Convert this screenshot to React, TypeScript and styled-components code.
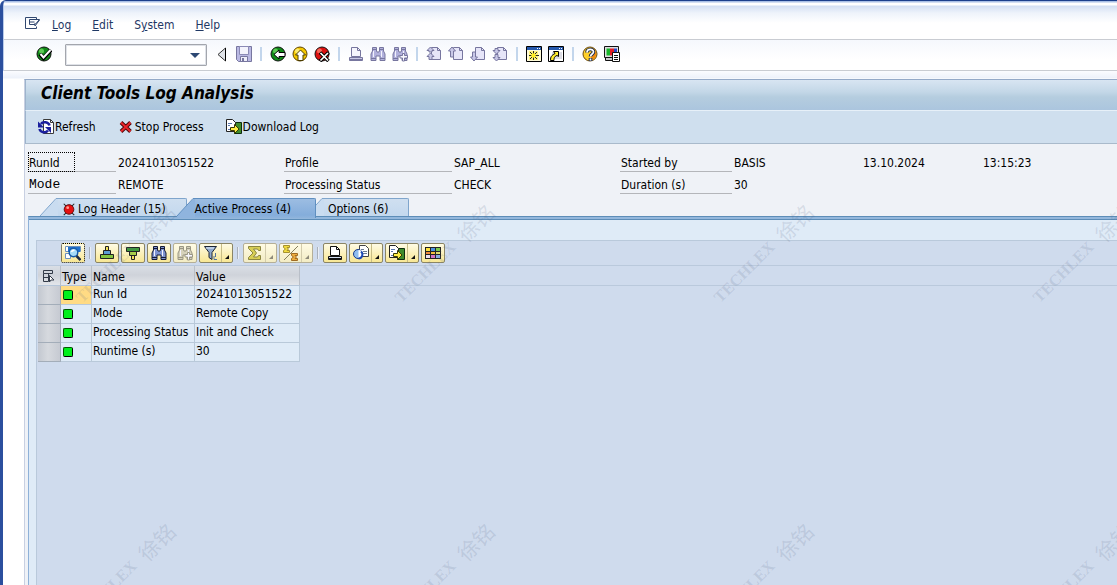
import React from "react";
import styled, { createGlobalStyle, css } from "styled-components";

const GlobalStyle = createGlobalStyle`
  *, *::before, *::after { box-sizing: border-box; }
  body {
    margin: 0;
    background: #ffffff;
    color: #000000;
    font-family: "DejaVu Sans Condensed", "DejaVu Sans", "Noto Sans CJK SC", sans-serif;
    font-size: 12px;
    line-height: 16px;
  }
  button, input, select { font: inherit; color: inherit; }
  svg { display: block; flex: none; }
`;

/* ---------- window frame ---------- */

const Window = styled.div`
  position: relative;
  display: flex;
  flex-direction: column;
  min-height: 100vh;
  overflow: hidden;
  border-top: 1px solid #1c3f8c;
  border-left: 3px solid #2b4f9e;
  border-top-left-radius: 6px;
  box-shadow: inset 1px 1px 0 #b9cbea;
  background: #ffffff;
`;

const MenuBar = styled.nav`
  display: flex;
  align-items: center;
  gap: 21px;
  height: 39px;
  margin: 0 0 0 1px;
  padding: 10px 0 0 21px;
  border-bottom: 1px solid #c9ccd2;
  background: linear-gradient(#a9bfe6 0, #a9bfe6 1px, #ffffff 2px, #ffffff 4px, #d3dff3 5px, #eef3fb 12px, #ffffff 22px);
`;

const MenuIcon = styled.button`
  display: flex;
  margin: 0 -10px 3px 0;
  padding: 0;
  border: 0;
  background: none;
`;

const MenuItem = styled.button`
  padding: 0;
  border: 0;
  background: none;
  color: #1f3864;
`;

const SystemBar = styled.div`
  display: flex;
  align-items: center;
  gap: 6px;
  height: 31px;
  margin-left: 1px;
  padding: 0 0 2px 32px;
  border-bottom: 1px solid #c9ccd2;
  background: linear-gradient(#f5f8fd, #ffffff 20px);
`;

const IconButton = styled.button`
  display: flex;
  flex: none;
  padding: 0;
  border: 0;
  background: none;
`;

const CommandBox = styled.div`
  display: flex;
  align-items: center;
  width: 142px;
  height: 22px;
  margin: 2px 1px 0 7px;
  padding-right: 6px;
  border: 1px solid #a3a6ad;
  border-radius: 1px;
  box-shadow: inset 0 0 0 1px #dfe2e8;
  background: #ffffff;
`;

const CommandInput = styled.input`
  flex: 1;
  min-width: 0;
  height: 16px;
  padding: 0 4px;
  border: 0;
  outline: 0;
  background: none;
`;

const BarDivider = styled.span`
  flex: none;
  width: 2px;
  height: 14px;
  margin: 0 2px;
  background: #c3d6ec;
`;

/* ---------- screen area ---------- */

const Screen = styled.main`
  display: flex;
  flex: 1;
  flex-direction: column;
  padding: 8px 0 0 20px;
  background: linear-gradient(#fbfcff, #edf1fa 7px, #ffffff 8px);
`;

const Work = styled.div`
  display: flex;
  flex: 1;
  flex-direction: column;
  margin-left: 1px;
  border-top: 1px solid #94a9c8;
  border-left: 1px solid #c8d0e2;
  background: #eff2f7;
`;

const Title = styled.h1`
  height: 31px;
  margin: 0;
  padding: 0 0 0 15px;
  border-left: 1px solid #9db4cc;
  border-bottom: 1px solid #e7f0f8;
  background: linear-gradient(#d8e5f2, #c3d7e7 12px, #b5cddf 17px, #abc5de);
  font-size: 17px;
  font-weight: bold;
  font-style: italic;
  line-height: 27px;
`;

const AppBar = styled.div`
  display: flex;
  align-items: center;
  gap: 22px;
  height: 33px;
  padding: 0 0 0 12px;
  border-left: 1px solid #9db4cc;
  border-bottom: 1px solid #a9bacb;
  background: #cfdfee;
`;

const AppButton = styled.button`
  display: flex;
  align-items: center;
  gap: 1px;
  padding: 0;
  border: 0;
  background: none;
`;

const Facts = styled.dl`
  display: grid;
  grid-template-columns: 90px 166px 170px 166px 114px 129px 120px auto;
  row-gap: 2px;
  margin: 0;
  padding: 8px 0 4px 3px;
`;

const Term = styled.dt<{ $column: number; $mono?: boolean }>`
  grid-column: ${(p) => p.$column};
  height: 20px;
  margin-right: 2px;
  padding: 3px 0 0 1px;
  border-bottom: 1px solid #b4b6ba;
  ${(p) =>
    p.$mono &&
    css`
      font-family: "Liberation Mono", monospace;
      font-size: 13px;
    `}
`;

const FocusMark = styled.span`
  display: block;
  width: 47px;
  height: 20px;
  margin: -3px 0 0 -1px;
  padding: 2px 0 0;
  border: 1px dotted #000000;
`;

const Detail = styled.dd`
  height: 20px;
  margin: 0;
  padding-top: 3px;
`;

/* ---------- tabs ---------- */

const TabList = styled.div`
  display: flex;
  height: 18px;
  padding-left: 15px;
`;

const Tab = styled.button<{ $active?: boolean }>`
  position: relative;
  z-index: ${(p) => (p.$active ? 2 : 1)};
  display: flex;
  height: ${(p) => (p.$active ? 20 : 18)}px;
  margin-right: -10px;
  padding: 0;
  border: 0;
  background: none;
  white-space: nowrap;
`;

const TabBody = styled.span<{ $active?: boolean }>`
  display: flex;
  align-items: center;
  gap: 2px;
  height: 100%;
  padding: ${(p) => (p.$active ? "0 24px 0 0" : "2px 20px 0 4px")};
  border-top: 1px solid ${(p) => (p.$active ? "#5f8fc0" : "#7fa5cc")};
  border-right: 1px solid ${(p) => (p.$active ? "#5f8fc0" : "#7fa5cc")};
  border-top-right-radius: 2px;
  background: ${(p) =>
    p.$active ? "linear-gradient(#9cbde2, #84addb 16px, #8fb4dc)" : "linear-gradient(#cfdff0, #c3d8ee)"};
`;

const TabPanel = styled.section`
  position: relative;
  display: flex;
  flex: 1;
  flex-direction: column;
  margin-left: 3px;
  padding: 20px 0 0 7px;
  border-left: 1px solid #8fb1d8;
  border-top: 1px solid #5d8db8;
  box-shadow: inset 0 2px 0 #93b7dc, inset 0 3px 0 #5d8db8;
  background: #dfebf7;
`;

/* ---------- list ---------- */

const Grid = styled.div`
  flex: 1;
  margin-top: 3px;
  border-left: 1px solid #b9c9db;
  border-top: 1px solid #b9c9db;
  background: #cfdbed;
`;

const GridBar = styled.div`
  display: flex;
  align-items: center;
  gap: 2px;
  height: 25px;
  padding-left: 24px;
  border-bottom: 1px solid #bac9dc;
`;

const GridButton = styled.button<{ $split?: boolean; $off?: boolean; $focus?: boolean }>`
  display: flex;
  flex: none;
  align-items: center;
  width: ${(p) => (p.$split ? 34 : 24)}px;
  height: 20px;
  padding: 0 0 0 3px;
  border: 1px ${(p) => (p.$focus ? "dotted #000000" : p.$off ? "solid #b5af97" : "solid #8b8565")};
  border-radius: 2px;
  background: linear-gradient(#fffbe4, ${(p) => (p.$off ? "#f3ecc4" : "#f8e794")});
`;

const SplitMark = styled.span<{ $off?: boolean }>`
  align-self: stretch;
  flex: 1;
  margin-left: 2px;
  border-left: 1px solid ${(p) => (p.$off ? "#d3ccac" : "#c8bd86")};
  display: flex;
  align-items: flex-end;
  justify-content: flex-end;
  padding: 0 3px 3px 0;
`;

const GridDivider = styled.span`
  flex: none;
  width: 2px;
  height: 12px;
  margin: 0 2px;
  border-left: 1px solid #a9b0ba;
  border-right: 1px solid #e9eef6;
`;

const Table = styled.table`
  width: 100%;
  margin-left: 1px;
  border-collapse: separate;
  border-spacing: 0;
  table-layout: fixed;
`;

const Head = styled.th`
  height: 20px;
  padding: 2px 0 0 1px;
  border-right: 1px solid #b9bfc8;
  border-bottom: 1px solid #b5c6d9;
  background: linear-gradient(#d9dee5, #cfd3da 9px, #e3e6ea);
  font-weight: normal;
  text-align: left;
  white-space: nowrap;
`;

const HeadFill = styled.th`
  border-bottom: 1px solid #bac9dc;
`;

const Cell = styled.td<{ $marked?: boolean }>`
  height: 19px;
  padding: 0 0 2px 1px;
  border-right: 1px solid #b9c9d9;
  border-bottom: 1px solid #b9c9d9;
  background: ${(p) => (p.$marked ? "#ffdb84" : "#dfebf7")};
  white-space: nowrap;
`;

const Picker = styled.td`
  height: 19px;
  padding: 0;
  border-right: 1px solid #a3adb9;
  border-bottom: 1px solid #a3adb9;
`;

const PickerButton = styled.button`
  display: block;
  width: 100%;
  height: 18px;
  padding: 0;
  border: 0;
  background: linear-gradient(90deg, #c3c8d0, #d6d9de 10px, #c6cad2);
`;

const Lamp = styled.span`
  display: block;
  width: 10px;
  height: 10px;
  margin: 2px 0 0 1px;
  border: 1px solid #005a00;
  border-right-color: #000000;
  border-bottom-color: #000000;
  border-radius: 2px;
  background: #00f01c;
`;

/* ---------- watermark ---------- */

const Watermarks = styled.div`
  position: absolute;
  inset: 93px 0 0 -38px;
  z-index: 5;
  display: grid;
  grid-template-columns: repeat(auto-fill, 319px);
  grid-auto-rows: 319px;
  width: 200vw;
  overflow: hidden;
  pointer-events: none;
`;

const Mark = styled.span`
  display: flex;
  align-items: center;
  justify-content: center;
  gap: 10px;
  transform: rotate(-45deg);
  color: rgba(90, 105, 135, 0.17);
  font-family: "Liberation Serif", serif;
  font-size: 16px;
  font-weight: bold;
`;

const MarkName = styled.span`
  font-family: "Noto Sans CJK SC", sans-serif;
  font-size: 21px;
  font-weight: normal;
`;

/* ---------- drawings ---------- */

const Pic = ({ children, size = 16 }: { children: React.ReactNode; size?: number }) => (
  <svg width={size} height={size} viewBox="0 0 16 16" fill="none" aria-hidden="true">
    {children}
  </svg>
);

const MenuGlyph = () => (
  <Pic>
    <path d="M11.500 3.500v-2H.500v11h11v-2M4.500 5V3.500h10L10.500 8H9M4.500 5v3.500H10V10l4.500-6M4.500 6h5" stroke="#30476f" />
  </Pic>
);

const Ball = ({ fill, shine, edge = "#111" }: { fill: string; shine: string; edge?: string }) => (
  <>
    <circle cx="8" cy="8" r="7" fill={fill} stroke={edge} />
    <circle cx="5.500" cy="5" r="2.500" fill={shine} opacity="0.8" />
  </>
);

const CheckIcon = () => (
  <Pic>
    <Ball fill="#118a18" shine="#6fdb62" />
    <path d="M4 8l3.500 4L15 4" stroke="#000" strokeWidth="4" />
    <path d="M4.500 8l3 3.500L14.500 4" stroke="#fff" strokeWidth="2" />
  </Pic>
);
const BackIcon = () => (
  <Pic>
    <Ball fill="#118a18" shine="#6fdb62" />
    <path d="M4 8.500l5-4.500v2.500h6v4H9V13z" fill="#fff" stroke="#000" />
  </Pic>
);
const ExitIcon = () => (
  <Pic>
    <Ball fill="#f4c800" shine="#fff48a" edge="#5e4300" />
    <path d="M8.500 4l5 5h-2.500v5.500H6V9H3.500z" fill="#fff" stroke="#4b3c00" />
  </Pic>
);
const CancelIcon = () => (
  <Pic>
    <Ball fill="#dc1010" shine="#ff7d6c" />
    <path d="M6 6.500l8.500 8.500M14.500 6.500L6 15" stroke="#000" strokeWidth="3.600" />
    <path d="M6.500 7l7.500 7.500M14 7l-7.500 7.500" stroke="#fff" strokeWidth="1.700" />
  </Pic>
);
const CollapseIcon = () => (
  <Pic>
    <path d="M11.500 2.500v12L4 8.500z" fill="#dfe2e8" />
    <path d="M11.500 2v13" stroke="#000" />
    <path d="M11.500 2L4 8.500l7.500 6.500" stroke="#333" />
  </Pic>
);
const SaveIcon = () => (
  <Pic>
    <path d="M.5.5h15v15h-13l-2-2z" fill="#b9b8e3" stroke="#77769f" />
    <path d="M3.500.500h9v8h-9z" fill="#f3f3fc" stroke="#8b8ab5" />
    <path d="M4.500 10.500h7v5h-7z" fill="#eeeefa" stroke="#77769f" />
    <path d="M6 12h2v3H6z" fill="#77769f" />
  </Pic>
);
const PrintIcon = ({ ink = "#77769f", paper = "#f5f5fd", tray = "#c9c8e6" }) => (
  <Pic>
    <path d="M3.500 10.500v-9h6l3 3v6z" fill={paper} stroke={ink} />
    <path d="M9.500 1.500v3h3" stroke={ink} />
    <path d="M1.500 11.500h13v3h-13z" fill={tray} stroke={ink} />
    <path d="M2 13.500h12" stroke={ink} />
  </Pic>
);
const FindIcon = ({ ink = "#77769f", body = "#b2b1dc", plus = false }) => (
  <Pic>
    <path
      d="M2.500 1.500h4V5l.5 1h2l.5-1V1.500h4V5l1.500 3v6.500h-5V10H6v4.500H1V8l1.500-3z"
      fill={body}
      stroke={ink}
    />
    <path d="M2.500 3.500h4M9.500 3.500h4M1 12.500h5M10 12.500h5" stroke={ink} />
    <path d="M3.500 5v6M11.500 5v6" stroke="#f2f2fc" />
    {plus && (
      <path d="M10.500 7.500h2v2h3v2.500h-3v3h-2v-3h-2.500V9.500h2.500z" fill="#f7f7fd" stroke={ink} />
    )}
  </Pic>
);
const PageIcon = ({ move }: { move: "first" | "up" | "down" | "last" }) => (
  <Pic>
    <path d="M5.500 1.500h6l3 3v9h-9z" fill="#e6e5f8" stroke="#77769f" />
    <path d="M11.500 1.500v3h3" stroke="#77769f" />
    {move === "up" && <path d="M4 1L.5 5h2v6h3V5h2z" fill="#c9c8e8" stroke="#77769f" />}
    {move === "down" && <path d="M4 15L.5 11h2V6h3v5h2z" fill="#c9c8e8" stroke="#77769f" />}
    {move === "first" && (
      <path d="M4.500 1L1 4.500h2V6h3V4.500h2zM4.500 7L1 10.500h2v3h3v-3h2z" fill="#c9c8e8" stroke="#77769f" />
    )}
    {move === "last" && (
      <path d="M4.500 8L1 4.500h2v-2h3v2h2zM4.500 15L1 11.500h2v-3h3v3h2z" fill="#c9c8e8" stroke="#77769f" />
    )}
  </Pic>
);
const SessionIcon = ({ shortcut = false }) => (
  <Pic>
    <path d="M.5.5h15v15H.5z" fill={shortcut ? "#ffffff" : "#fffbd8"} stroke="#000" />
    <path d="M1 1h14v3H1z" fill="#2458ad" />
    <path d="M11 2.500h1M13 2.500h1" stroke="#fff" />
    {shortcut ? (
      <>
        <path d="M4 6h10v7H4z" fill="#dcdce4" />
        <path d="M5.500 5.500h5v5L9 9.500c-3 1-3 3-3 5H2.500c0-4 1-5 4.500-7z" fill="#ffec2e" stroke="#000" />
      </>
    ) : (
      <>
        <path d="M3 5h9v9H3z" fill="#fff27a" />
        <path d="M7.500 5v3M7.500 11v3M3 9.500h3M9 9.500h4M4 6l2 2M11 6L9 8M4 13l2-2M11 13l-2-2" stroke="#222" />
        <circle cx="7.500" cy="9.500" r="2.200" fill="#ffee22" />
      </>
    )}
  </Pic>
);
const HelpIcon = () => (
  <Pic>
    <circle cx="8" cy="8" r="7" fill="#ffd02a" stroke="#6b4a10" />
    <path d="M11 2a7 7 0 0 1 1 11l-3 1V9z" fill="#f08c10" />
    <path d="M5 6.500c0-4 6.500-4 6.500-.5 0 2-3 2-3 4.500M8.500 12v3" stroke="#1a2a4a" strokeWidth="3.600" />
    <path d="M5 6.500c0-4 6.500-4 6.500-.5 0 2-3 2-3 4.500M8.500 12.500v2" stroke="#fff" strokeWidth="1.700" />
  </Pic>
);
const LayoutIcon = () => (
  <Pic>
    <path d="M.5.500h14v11H.5z" fill="#dcdce0" stroke="#111" />
    <path d="M1.500 11.500h10v3h-10z" fill="#c8c8cc" stroke="#111" />
    <path d="M2.500 2.500h3.500v7H2.500z" fill="#17b62a" />
    <path d="M6 2.500h4v7H6z" fill="#e31b23" />
    <path d="M10 2.500h3v7h-3z" fill="#2848c8" />
    <path d="M8.500 6.500h7v9h-7z" fill="#fff" stroke="#111" />
    <path d="M10 9.500h4M10 11.500h4M10 13.500h4" stroke="#111" />
  </Pic>
);
const RefreshIcon = () => (
  <Pic>
    <path d="M5.500.500h7l3 3v11h-10z" fill="#fff" stroke="#3a3a3a" />
    <path d="M12.500.500v3h3" stroke="#3a3a3a" />
    <path d="M11.500 6.500C10.500 3 5 2 3 5" stroke="#1a1f9e" strokeWidth="2.600" />
    <path d="M0 2.500v6h6z" fill="#1a1f9e" />
    <path d="M1.500 10c1 3.500 6 4.500 8.500 1.500" stroke="#1a1f9e" strokeWidth="2.600" />
    <path d="M13 14V8H7z" fill="#1a1f9e" />
  </Pic>
);
const StopIcon = () => (
  <Pic>
    <path d="M3 3.500l9.500 9M12.500 3.500L3 12.500" stroke="#4a0808" strokeWidth="3.800" />
    <path d="M3 3.500l9.500 9M12.500 3.500L3 12.500" stroke="#e8252c" strokeWidth="2" />
  </Pic>
);
const ExportIcon = () => (
  <Pic>
    <path d="M8.500 3.500h7v11h-7z" fill="#3f8c2c" stroke="#0e2d0e" />
    <path d="M.500.500h6l3 3v9h-9z" fill="#fff" stroke="#222" />
    <path d="M2 4.500h4M2 6.500h2M2 10.500h2" stroke="#5a76ad" />
    <path d="M4.500 8.500h4V5.500l4.500 4.500-4.500 4.500v-3h-4z" fill="#ffee44" stroke="#3a3a00" />
  </Pic>
);
const AlertIcon = () => (
  <Pic size={14}>
    <path d="M2 2l3 3M14 2l-3 3M2 15l3-3M14 15l-3-3" stroke="#222" strokeWidth="1.200" />
    <circle cx="8" cy="8.500" r="5.500" fill="#e50f0f" stroke="#5e0505" />
    <circle cx="6.500" cy="6.500" r="1.600" fill="#ff9c92" />
  </Pic>
);
const DetailIcon = () => (
  <Pic>
    <path d="M.5 1.500h15v5H.5zM.5 8.500h5v5H.5z" fill="#fff" stroke="#6a90bd" />
    <path d="M3 2h12v5H3z" fill="#1f70cd" />
    <circle cx="8.500" cy="7.500" r="4.300" fill="#a5dcfa" stroke="#155aa8" strokeWidth="1.400" />
    <path d="M6.500 7a2.500 2.500 0 0 1 3-1.500" stroke="#fff" strokeWidth="1.500" />
    <path d="M11.500 11l4 4" stroke="#1b2b45" strokeWidth="2.500" />
  </Pic>
);
const SortIcon = ({ down = false }) => (
  <Pic>
    <g transform={down ? "matrix(1 0 0 -1 0 16)" : undefined}>
      <path d="M6.500 1.500h3v4h-3z" fill="#f5e35a" stroke="#222" />
      <path d="M4.500 5.500h7v4h-7z" fill={down ? "#a9cf49" : "#5c9bd6"} stroke="#222" />
      <path d="M1.500 9.500h13v4h-13z" fill={down ? "#3f9c3a" : "#83c441"} stroke="#222" />
    </g>
  </Pic>
);
const FilterIcon = () => (
  <Pic>
    <path d="M1.500 1.500h12L9 7.500v7l-3-2v-5z" fill="#8fa9cd" stroke="#1c2433" />
    <path d="M3 3h8" stroke="#e6effa" />
    <path d="M12.500 8v4M11 11v3.500h3" stroke="#53719b" />
  </Pic>
);
const SumIcon = () => (
  <Pic>
    <path d="M1.500 1.500h12v4h-2l-1-1.500H6.500L9.500 8l-3 4h4l1-1.500h2v4h-12v-2L6 8 1.500 3.500z" fill="#d8cf55" stroke="#8b8641" />
  </Pic>
);
const SubtotalIcon = () => (
  <Pic>
    <path d="M15 1L1 15" stroke="#86805c" />
    <path d="M.500.500h6v2H4l1.500 1.500L4 5.500h2.500v2h-6v-2l2-1.500-2-1.500z" fill="#f1dc3e" stroke="#a5912f" />
    <path d="M8.500 8.500h6v2H12l1.500 1.500L12 13.500h2.500v2h-6v-2l2-1.500-2-1.500z" fill="#eeae3e" stroke="#a06b22" />
  </Pic>
);
const ViewIcon = () => (
  <Pic>
    <path d="M6.500.5h6l3 3v8h-9z" fill="#fff" stroke="#444" />
    <path d="M8 4.500h3M10 6.500h4M10 8.500h4" stroke="#6c7b92" />
    <circle cx="5" cy="9" r="4.500" fill="#8fbdf0" stroke="#143a8c" />
    <path d="M5.500 5v8a4 4 0 0 0 0-8z" fill="#ffffff" />
    <path d="M8 6.500a4 4 0 0 1-2.500 7" stroke="#1d49b4" strokeWidth="2" />
  </Pic>
);
const ChooseLayoutIcon = () => (
  <Pic>
    <path d="M0 2h16v12H0z" fill="#222" />
    {["#ffe23c", "#4d92dd", "#79c84c"].map((c, x) => (
      <path key={c} d={`M${1 + x * 5} 3h4v3h-4z`} fill={c} />
    ))}
    {["#f08a3b", "#f3c13c", "#e9e36c"].map((c, x) => (
      <path key={c} d={`M${1 + x * 5} 7h4v2h-4z`} fill={c} />
    ))}
    {["#efe0ee", "#d374c3", "#8fb5ee"].map((c, x) => (
      <path key={c} d={`M${1 + x * 5} 10h4v3h-4z`} fill={c} />
    ))}
  </Pic>
);
const SelectAllIcon = () => (
  <Pic>
    <path d="M4.500 1.500h9v3h-9zM4.500 4.500v8M4.500 8.500h5M4.500 12.500h5M9.500 4.500v8" stroke="#333b48" />
    <path d="M10.500 6.500l4.500 4.500h-3l-1.500 2z" fill="#fff" stroke="#333b48" />
  </Pic>
);
const DropMark = () => (
  <svg width="10" height="5" viewBox="0 0 10 5" aria-hidden="true">
    <path d="M0 0h10L5 5z" fill="#2d4873" />
  </svg>
);
const CornerMark = ({ off = false }) => (
  <svg width="4" height="4" viewBox="0 0 4 4" aria-hidden="true">
    <path d="M4 0v4H0z" fill={off ? "#8f8b7a" : "#111"} />
  </svg>
);
const Slant = ({ active = false }) => (
  <svg width="18" height={active ? 20 : 18} viewBox={active ? "0 0 18 20" : "0 0 18 18"} aria-hidden="true">
    <path d={active ? "M0 20v-2L16 1h2v19z" : "M0 18L16 1h2v17z"} fill={active ? "#8fb4de" : "#c9dcf0"} />
    <path d="M0 18L16 .5h2" fill="none" stroke={active ? "#5f8fc0" : "#7fa5cc"} />
  </svg>
);

/* ---------- content ---------- */

type Tool = { label: string; icon: React.ReactNode };

const systemTools: Tool[][] = [
  [
    { label: "Collapse", icon: <CollapseIcon /> },
    { label: "Save", icon: <SaveIcon /> },
  ],
  [
    { label: "Back", icon: <BackIcon /> },
    { label: "Exit", icon: <ExitIcon /> },
    { label: "Cancel", icon: <CancelIcon /> },
  ],
  [
    { label: "Print", icon: <PrintIcon /> },
    { label: "Find", icon: <FindIcon /> },
    { label: "Find next", icon: <FindIcon plus /> },
  ],
  [
    { label: "First page", icon: <PageIcon move="first" /> },
    { label: "Previous page", icon: <PageIcon move="up" /> },
    { label: "Next page", icon: <PageIcon move="down" /> },
    { label: "Last page", icon: <PageIcon move="last" /> },
  ],
  [
    { label: "New session", icon: <SessionIcon /> },
    { label: "Create shortcut", icon: <SessionIcon shortcut /> },
  ],
  [
    { label: "Help", icon: <HelpIcon /> },
    { label: "Customize local layout", icon: <LayoutIcon /> },
  ],
];

type GridTool = Tool & { split?: boolean; off?: boolean; focus?: boolean };

const gridTools: GridTool[][] = [
  [{ label: "Details", icon: <DetailIcon />, focus: true }],
  [
    { label: "Sort ascending", icon: <SortIcon /> },
    { label: "Sort descending", icon: <SortIcon down /> },
    { label: "Find", icon: <FindIcon ink="#151a35" body="#7f94d0" /> },
    { label: "Find next", icon: <FindIcon ink="#9a9784" body="#d6d2bb" plus />, off: true },
    { label: "Filter", icon: <FilterIcon />, split: true },
  ],
  [
    { label: "Total", icon: <SumIcon />, split: true, off: true },
    { label: "Subtotals", icon: <SubtotalIcon />, split: true, off: true },
  ],
  [
    { label: "Print", icon: <PrintIcon ink="#111111" paper="#ffffff" tray="#cfdcee" /> },
    { label: "Views", icon: <ViewIcon />, split: true },
    { label: "Export", icon: <ExportIcon />, split: true },
    { label: "Choose layout", icon: <ChooseLayoutIcon /> },
  ],
];

const menus = [
  ["", "L", "og"],
  ["", "E", "dit"],
  ["S", "y", "stem"],
  ["", "H", "elp"],
];

const rows = [
  ["Run Id", "20241013051522"],
  ["Mode", "Remote Copy"],
  ["Processing Status", "Init and Check"],
  ["Runtime (s)", "30"],
];

export default function App() {
  return (
    <>
      <GlobalStyle />
      <Window>
        <MenuBar aria-label="Main menu">
          <MenuIcon aria-label="Session menu">
            <MenuGlyph />
          </MenuIcon>
          {menus.map(([before, key, after]) => (
            <MenuItem key={after}>
              {before}
              <u>{key}</u>
              {after}
            </MenuItem>
          ))}
        </MenuBar>
        <SystemBar>
          <IconButton aria-label="Enter">
            <CheckIcon />
          </IconButton>
          <CommandBox>
            <CommandInput aria-label="Command" />
            <IconButton aria-label="Command history">
              <DropMark />
            </IconButton>
          </CommandBox>
          {systemTools.map((group, i) => (
            <React.Fragment key={i}>
              {i > 0 && <BarDivider />}
              {group.map((tool) => (
                <IconButton key={tool.label} aria-label={tool.label}>
                  {tool.icon}
                </IconButton>
              ))}
            </React.Fragment>
          ))}
        </SystemBar>
        <Screen>
          <Work>
            <Title>Client Tools Log Analysis</Title>
            <AppBar>
              <AppButton>
                <RefreshIcon />
                Refresh
              </AppButton>
              <AppButton>
                <StopIcon />
                Stop Process
              </AppButton>
              <AppButton>
                <ExportIcon />
                Download Log
              </AppButton>
            </AppBar>
            <Facts>
              <Term $column={1}>
                <FocusMark>RunId</FocusMark>
              </Term>
              <Detail>20241013051522</Detail>
              <Term $column={3}>Profile</Term>
              <Detail>SAP_ALL</Detail>
              <Term $column={5}>Started by</Term>
              <Detail>BASIS</Detail>
              <Detail>13.10.2024</Detail>
              <Detail>13:15:23</Detail>
              <Term $column={1} $mono>
                Mode
              </Term>
              <Detail>REMOTE</Detail>
              <Term $column={3}>Processing Status</Term>
              <Detail>CHECK</Detail>
              <Term $column={5}>Duration (s)</Term>
              <Detail>30</Detail>
            </Facts>
            <TabList role="tablist">
              <Tab role="tab" aria-selected={false}>
                <Slant />
                <TabBody>
                  <AlertIcon />
                  Log Header (15)
                </TabBody>
              </Tab>
              <Tab role="tab" aria-selected $active>
                <Slant active />
                <TabBody $active>Active Process (4)</TabBody>
              </Tab>
              <Tab role="tab" aria-selected={false}>
                <Slant />
                <TabBody>Options (6)</TabBody>
              </Tab>
            </TabList>
            <TabPanel role="tabpanel">
              <Grid>
                <GridBar>
                  {gridTools.map((group, i) => (
                    <React.Fragment key={i}>
                      {i > 0 && <GridDivider />}
                      {group.map((tool) => (
                        <GridButton
                          key={tool.label}
                          aria-label={tool.label}
                          $split={tool.split}
                          $off={tool.off}
                          $focus={tool.focus}
                        >
                          {tool.icon}
                          {tool.split && (
                            <SplitMark $off={tool.off}>
                              <CornerMark off={tool.off} />
                            </SplitMark>
                          )}
                        </GridButton>
                      ))}
                    </React.Fragment>
                  ))}
                </GridBar>
                <Table>
                  <colgroup>
                    <col width="23" />
                    <col width="31" />
                    <col width="103" />
                    <col width="105" />
                    <col />
                  </colgroup>
                  <thead>
                    <tr>
                      <Head aria-label="Select all">
                        <SelectAllIcon />
                      </Head>
                      <Head>Type</Head>
                      <Head>Name</Head>
                      <Head>Value</Head>
                      <HeadFill />
                    </tr>
                  </thead>
                  <tbody>
                    {rows.map(([name, value], i) => (
                      <tr key={name}>
                        <Picker>
                          <PickerButton aria-label={`Select ${name}`} />
                        </Picker>
                        <Cell $marked={i === 0}>
                          <Lamp />
                        </Cell>
                        <Cell>{name}</Cell>
                        <Cell>{value}</Cell>
                        <td />
                      </tr>
                    ))}
                  </tbody>
                </Table>
              </Grid>
            </TabPanel>
          </Work>
        </Screen>
        <Watermarks aria-hidden="true">
          {Array.from({ length: 12 }, (_, i) => (
            <Mark key={i}>
              TECHLEX
              <MarkName>徐铭</MarkName>
            </Mark>
          ))}
        </Watermarks>
      </Window>
    </>
  );
}
